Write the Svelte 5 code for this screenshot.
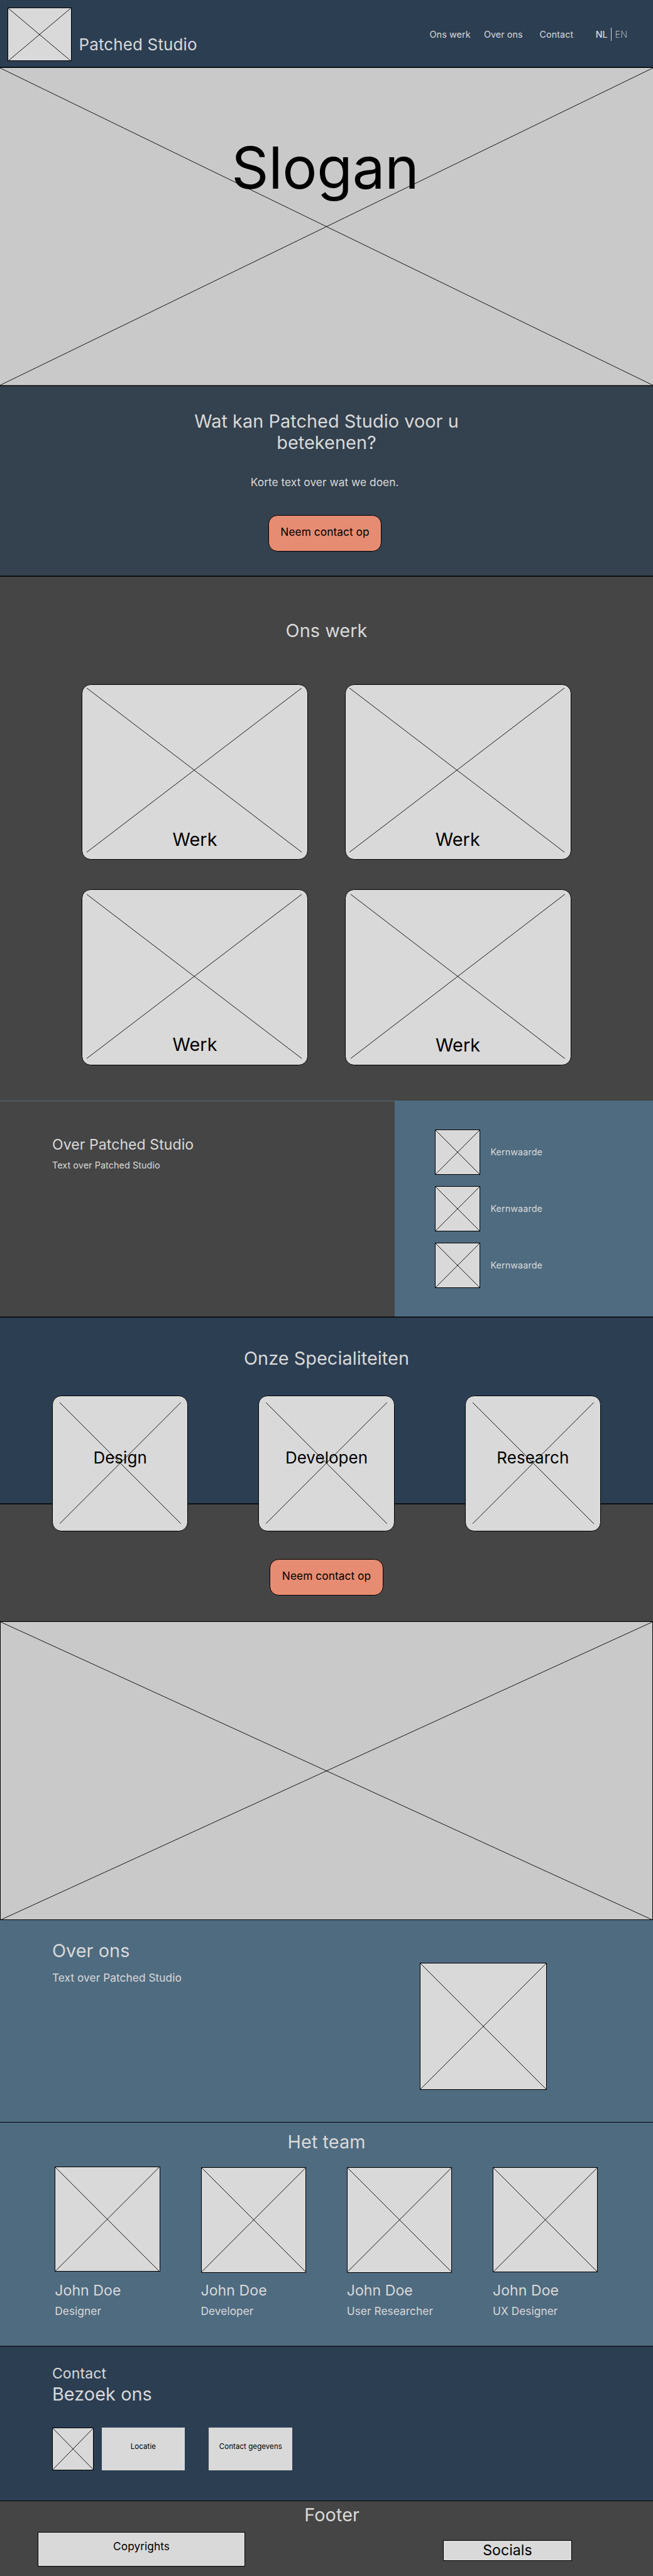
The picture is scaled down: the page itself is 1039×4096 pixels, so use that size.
<script>
  const navItems = [
    { label: 'Ons werk', cls: 'nav-work' },
    { label: 'Over ons', cls: 'nav-about' },
    { label: 'Contact', cls: 'nav-contact' },
  ];
  const works = [
    { title: 'Werk', cls: 'w1' },
    { title: 'Werk', cls: 'w2' },
    { title: 'Werk', cls: 'w3' },
    { title: 'Werk', cls: 'w4' },
  ];
  const values = ['Kernwaarde', 'Kernwaarde', 'Kernwaarde'];
  const specialities = ['Design', 'Developen', 'Research'];
  const team = [
    { name: 'John Doe', role: 'Designer', cls: 'm1' },
    { name: 'John Doe', role: 'Developer', cls: 'm2' },
    { name: 'John Doe', role: 'User Researcher', cls: 'm3' },
    { name: 'John Doe', role: 'UX Designer', cls: 'm4' },
  ];
</script>

{#snippet cross()}
  <svg class="cross" viewBox="0 0 100 100" preserveAspectRatio="none" aria-hidden="true">
    <path d="M0 0L100 100M100 0L0 100" vector-effect="non-scaling-stroke" />
  </svg>
{/snippet}

<div class="page">
  <header class="header ruled">
    <div class="frame logo">{@render cross()}</div>
    <span class="brand">Patched Studio</span>
    <nav class="nav">
      {#each navItems as item}
        <span class={item.cls}>{item.label}</span>
      {/each}
      <span class="lang">
        <span class="nl">NL</span>
        <span class="bar"></span>
        <span class="en">EN</span>
      </span>
    </nav>
  </header>

  <section class="hero ruled">
    {@render cross()}
    <h1>Slogan</h1>
  </section>

  <section class="intro ruled">
    <h2>Wat kan Patched Studio voor u betekenen?</h2>
    <p>Korte text over wat we doen.</p>
    <button>Neem contact op</button>
  </section>

  <section class="work">
    <h2>Ons werk</h2>
    <div class="work-grid">
      {#each works as work}
        <div class="card {work.cls}">
          {@render cross()}
          <span>{work.title}</span>
        </div>
      {/each}
    </div>
  </section>

  <section class="studio ruled">
    <div class="studio-text">
      <h3>Over Patched Studio</h3>
      <p>Text over Patched Studio</p>
    </div>
    <div class="values">
      {#each values as value}
        <div class="value">
          <div class="frame">{@render cross()}</div>
          <span>{value}</span>
        </div>
      {/each}
    </div>
  </section>

  <section class="special ruled">
    <h2>Onze Specialiteiten</h2>
    <div class="special-row">
      {#each specialities as name}
        <div class="card">
          {@render cross()}
          <span>{name}</span>
        </div>
      {/each}
    </div>
  </section>

  <section class="cta">
    <button>Neem contact op</button>
  </section>

  <div class="frame banner">{@render cross()}</div>

  <section class="about">
    <div>
      <h2>Over ons</h2>
      <p>Text over Patched Studio</p>
    </div>
    <div class="frame portrait">{@render cross()}</div>
  </section>

  <section class="team">
    <h2>Het team</h2>
    <div class="team-row">
      {#each team as member}
        <div class="member {member.cls}">
          <div class="photo"><div class="frame">{@render cross()}</div></div>
          <h3>{member.name}</h3>
          <p>{member.role}</p>
        </div>
      {/each}
    </div>
  </section>

  <section class="contact">
    <h3>Contact</h3>
    <h2>Bezoek ons</h2>
    <div class="contact-row">
      <div class="frame pin">{@render cross()}</div>
      <div class="box">Locatie</div>
      <div class="box">Contact gegevens</div>
    </div>
  </section>

  <footer class="footer">
    <h2>Footer</h2>
    <div class="footer-row">
      <div class="copyrights">Copyrights</div>
      <div class="socials">Socials</div>
    </div>
  </footer>
</div>

<style>
  /* 1rem equals 100 design units */
  :global(html) { font-size: 72.13px; }
  :global(body) { margin: 0; background: #454545; }

  .page {
    width: 100%;
    overflow: hidden;
    font-family: Inter, 'Liberation Sans', sans-serif;
    font-size: 0.24rem;
    line-height: 1.2;
    letter-spacing: 0.003em;
    color: #d9d9d9;
  }
  .page * { box-sizing: border-box; }
  h1, h2, h3, p { margin: 0; font-weight: 400; }
  h2 { font-size: 0.4rem; }
  h3 { font-size: 0.32rem; }

  .cross {
    display: block;
    width: 100%;
    height: 100%;
    min-width: 0;
    min-height: 0;
    overflow: visible;
    grid-area: 1 / 1;
  }
  .cross path { stroke: #000; stroke-width: 0.9px; fill: none; }
  .frame { background: #d9d9d9; border: 1px solid #000; overflow: hidden; flex: none; }

  /* heavy divider, slightly under two pixels thick */
  .ruled { border-bottom: 1px solid #000; box-shadow: inset 0 -1px rgba(0, 0, 0, 0.5); }

  button {
    display: block;
    width: 2.5rem;
    height: 0.8rem;
    padding: 0 0 0.04rem;
    border: 1px solid #000;
    border-radius: 0.2rem;
    background: #e68c72;
    color: #000;
    font: inherit;
    letter-spacing: inherit;
    white-space: nowrap;
  }

  .header {
    display: flex;
    align-items: flex-start;
    height: 1.5rem;
    padding-left: 0.17rem;
    background: #2c3e52;
  }
  .logo { width: 1.41rem; height: 1.19rem; margin-top: 0.16rem; }
  .brand { margin: 0.762rem 0 0 0.16rem; font-size: 0.36rem; letter-spacing: 0.006em; white-space: nowrap; }
  .nav {
    display: flex;
    margin: 0.635rem 0.565rem 0 auto;
    font-size: 0.2rem;
    white-space: nowrap;
  }
  .nav-about { margin-left: 0.295rem; }
  .nav-contact { margin-left: 0.37rem; }
  .lang { display: flex; margin-left: 0.49rem; }
  .nl { font-weight: 500; }
  .bar { width: 1px; height: 0.29rem; margin: -0.025rem 0.075rem 0; background: #d9d9d9; }
  .en { font-weight: 200; }

  .hero {
    display: grid;
    height: 7.01rem;
    background: #c9c9c9;
    justify-items: center;
  }
  .hero h1 {
    grid-area: 1 / 1;
    margin: 1.435rem 0.06rem 0 0;
    font-size: 1.28rem;
    letter-spacing: -0.003em;
    color: #000;
  }

  .intro {
    display: flex;
    flex-direction: column;
    align-items: center;
    height: 4.21rem;
    padding-top: 0.54rem;
    background: #34414e;
    text-align: center;
  }
  .intro h2 { width: 6.4rem; }
  .intro p { margin: 0.49rem 0.08rem 0 0; }
  .intro button { margin: 0.565rem 0.07rem 0 0; }

  .work { height: 11.54rem; padding-top: 0.955rem; text-align: center; background: #454545; }
  .work-grid {
    display: grid;
    grid-template-columns: 4.99rem 4.99rem;
    justify-content: center;
    gap: 0.66rem 0.81rem;
    margin-top: 0.925rem;
  }
  .card {
    display: grid;
    grid-template: minmax(0, 1fr) / minmax(0, 1fr);
    justify-items: center;
    background: #d9d9d9;
    border: 1px solid #000;
    border-radius: 0.2rem;
    color: #000;
  }
  .card span { grid-area: 1 / 1; }
  .work .card { height: 3.87rem; padding: 0.068rem 0.13rem 0.155rem 0.09rem; font-size: 0.4rem; }
  .work .card span { align-self: end; margin: 0 -0.03rem 0.035rem 0; }
  .work .w3, .work .w4 { padding-top: 0.098rem; padding-bottom: 0.125rem; }
  .work .w3 span { margin-bottom: 0.07rem; }
  .work .w4 span { margin: 0 0 0.06rem; }
  .work .w4 { padding-left: 0.12rem; padding-right: 0.12rem; }

  .studio {
    display: flex;
    height: 4.78rem;
    border-top: 1px solid #4f6b80;
    background: #454545;
  }
  .studio-text { width: 8.7rem; padding: 0.785rem 0 0 1.15rem; }
  .studio-text p { margin-top: 0.125rem; font-size: 0.2rem; }
  .values {
    flex: 1;
    display: flex;
    flex-direction: column;
    gap: 0.25rem;
    padding: 0.62rem 0 0 0.89rem;
    background: #4f6b80;
    box-shadow: inset 0 -1px rgba(0, 0, 0, 0.5);
  }
  .value { display: flex; align-items: center; gap: 0.23rem; font-size: 0.2rem; }
  .value .frame { width: 1rem; height: 1rem; }

  .special {
    height: 4.12rem;
    padding-top: 0.67rem;
    background: #2c3e52;
    text-align: center;
  }
  .special-row {
    display: flex;
    justify-content: space-between;
    margin-top: 0.57rem;
    padding: 0 1.15rem;
    position: relative;
  }
  .special .card { width: 3rem; height: 3rem; padding: 0.15rem; font-size: 0.36rem; }
  .special .card span { margin-top: 0.99rem; }

  .cta { display: flex; justify-content: center; height: 2.575rem; padding-top: 1.21rem; background: #454545; }

  .banner { height: 6.595rem; background: #c9c9c9; }

  .about {
    display: flex;
    justify-content: space-between;
    height: 4.46rem;
    padding: 0.44rem 2.35rem 0 1.15rem;
    background: #4f6b80;
    border-bottom: 1px solid #000;
  }
  .about p { margin-top: 0.22rem; }
  .portrait { width: 2.8rem; height: 2.8rem; margin-top: 0.5rem; }

  .team {
    height: 4.94rem;
    padding-top: 0.2rem;
    background: #4f6b80;
    border-bottom: 1px solid #000;
  }
  .team h2 { text-align: center; }
  .team-row { display: flex; gap: 0.9rem; padding: 0.29rem 0 0 1.21rem; }
  .member { width: 2.32rem; white-space: nowrap; }
  .photo { height: 2.55rem; }
  .photo .frame { width: 2.32rem; height: 2.32rem; }
  .m2 .photo, .m3 .photo { padding-top: 0.02rem; }
  .m4 .photo { padding-top: 0.01rem; }
  .member p { margin-top: 0.125rem; }

  .contact {
    height: 3.41rem;
    padding: 0.415rem 0 0 1.15rem;
    background: #2c3e52;
    border-bottom: 1px solid #000;
  }
  .contact h2 { margin-top: 0.015rem; }
  .contact-row { display: flex; margin-top: 0.495rem; }
  .pin { width: 0.92rem; height: 0.94rem; margin-right: 0.17rem; }
  .box {
    width: 1.84rem;
    height: 0.94rem;
    margin-right: 0.53rem;
    padding-top: 0.33rem;
    background: #d9d9d9;
    color: #000;
    font-size: 0.16rem;
    text-align: center;
  }

  .footer { height: 1.66rem; padding: 0.07rem 1.79rem 0 0.83rem; background: #454545; }
  .footer h2 { margin-left: 1.2rem; text-align: center; }
  .footer-row { display: flex; justify-content: space-between; align-items: flex-start; margin-top: 0.125rem; color: #000; text-align: center; }
  .copyrights { width: 4.58rem; height: 0.76rem; padding-top: 0.17rem; background: #d9d9d9; border: 1px solid #000; }
  .socials { width: 2.84rem; height: 0.46rem; margin-top: 0.18rem; padding-top: 0.025rem; background: #d9d9d9; border: 1px solid #000; font-size: 0.32rem; }
</style>
